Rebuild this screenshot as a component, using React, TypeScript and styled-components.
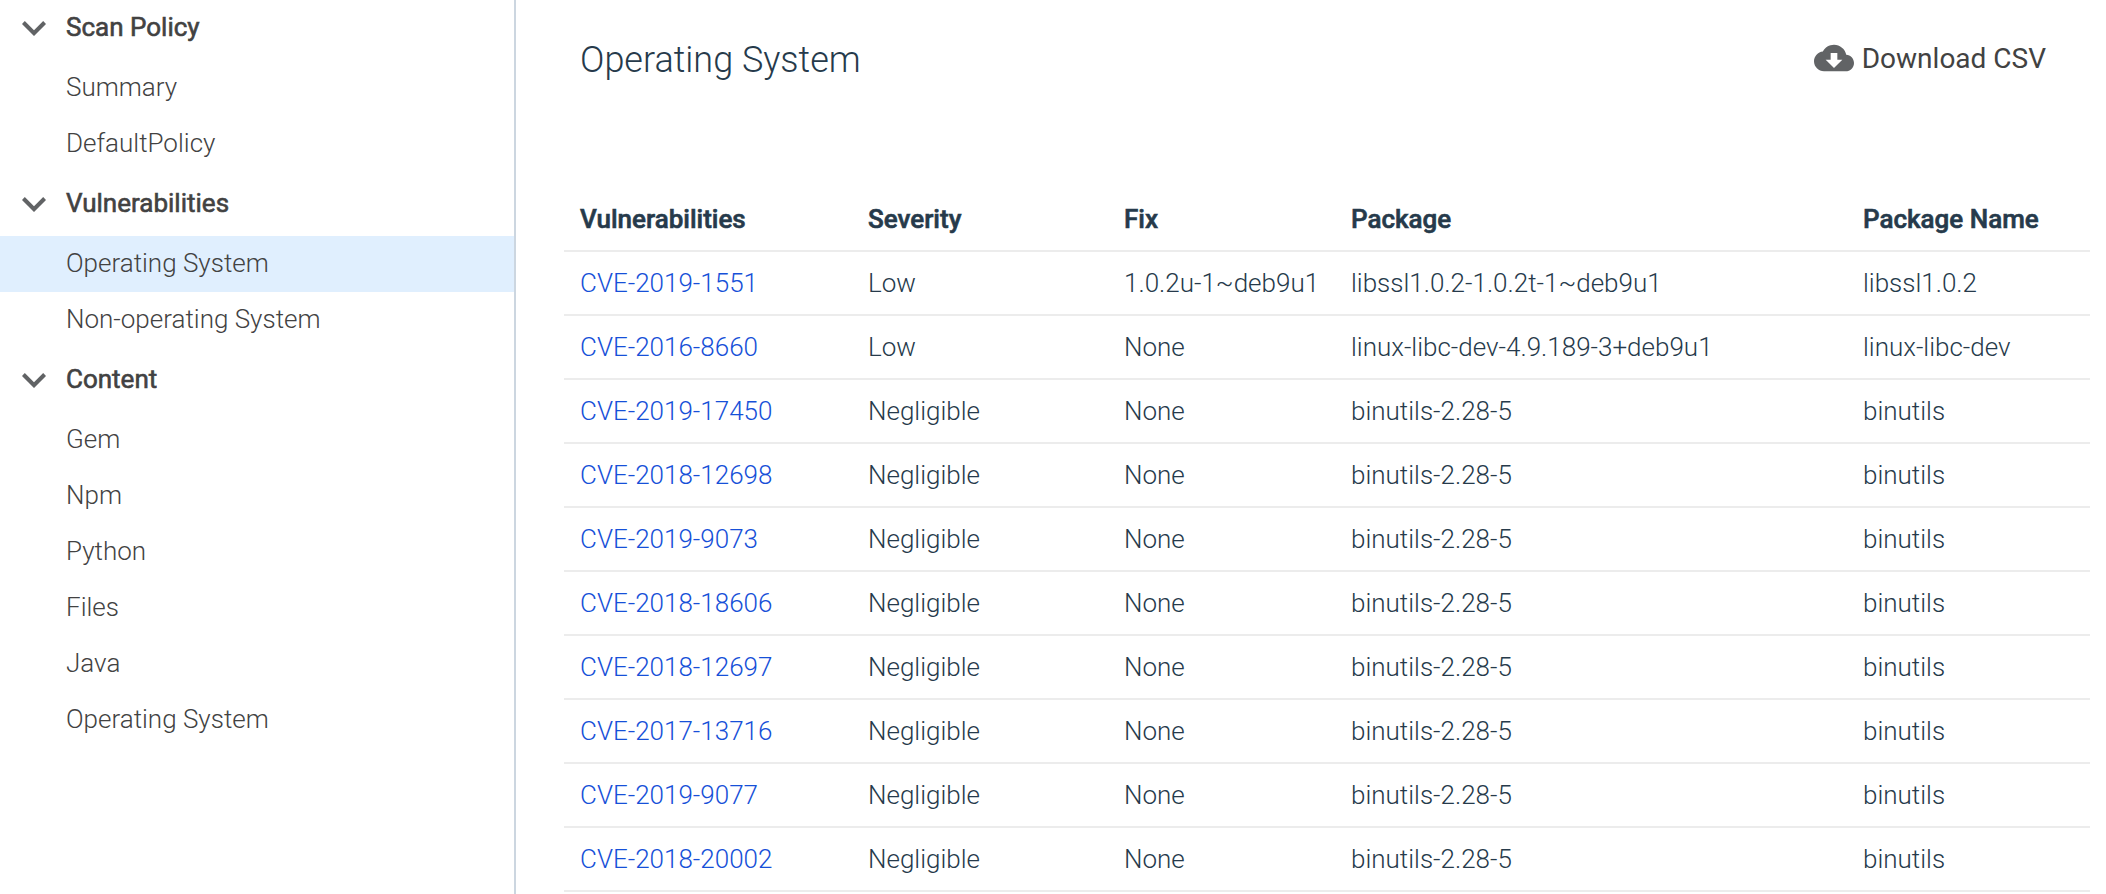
import React from "react";
import styled, { createGlobalStyle } from "styled-components";

const GlobalStyle = createGlobalStyle`
  *, *::before, *::after { box-sizing: border-box; }
  body {
    margin: 0;
    background: #fff;
    font-family: Roboto, "Liberation Sans", sans-serif;
    font-weight: 320;
    font-size: 26px;
    -webkit-font-smoothing: antialiased;
  }
`;

const Page = styled.div`
  display: flex;
  height: 894px;
  width: 2106px;
  overflow: hidden;
`;

const Sidebar = styled.nav`
  flex: none;
  width: 516px;
  border-right: 2px solid #ccd6e0;
  color: #424242;
`;

const Group = styled.section`
  &:first-child { margin-top: -4px; }
`;

const GroupHeader = styled.div`
  display: flex;
  align-items: center;
  height: 64px;
  padding: 0 0 2px 22px;
  font-weight: 400;
  -webkit-text-stroke: 0.6px currentColor;
`;

const Chevron = styled.svg`
  flex: none;
  width: 24px;
  height: 15px;
  margin: 2px 20px 0 0;
`;

const Item = styled.div<{ $active?: boolean }>`
  display: flex;
  align-items: center;
  height: 56px;
  padding: 0 0 2px 66px;
  background: ${(p) => (p.$active ? "#e0effe" : "transparent")};
`;

const Main = styled.main`
  flex: 1;
  min-width: 0;
  padding: 0 16px 0 48px;
  color: #263a4b;
`;

const Header = styled.header`
  display: flex;
  justify-content: space-between;
  align-items: flex-start;
  height: 188px;
  padding: 39px 44px 0 16px;
`;

const Title = styled.h1`
  margin: 0;
  font-size: 36px;
  line-height: 42px;
  font-weight: 300;
`;

const Download = styled.button`
  display: flex;
  align-items: center;
  gap: 8px;
  height: 39px;
  padding: 0;
  border: 0;
  background: none;
  color: #424242;
  font: 450 28px/39px Roboto, "Liberation Sans", sans-serif;
`;

const Cloud = styled.svg`
  width: 40px;
  height: 40px;
  margin-bottom: 2px;
`;

const Table = styled.div`
  display: grid;
`;

const Row = styled.div<{ $head?: boolean }>`
  display: grid;
  grid-template-columns: 288px 256px 227px 512px 1fr;
  align-items: center;
  height: 64px;
  padding: 0 0 0 16px;
  border-bottom: 2px solid #ececec;
  font-weight: ${(p) => (p.$head ? 500 : 320)};
  -webkit-text-stroke: ${(p) => (p.$head ? "0.6px currentColor" : "0")};
  white-space: nowrap;
`;

const Link = styled.a`
  color: #1650d8;
`;

const groups = [
  { name: "Scan Policy", items: ["Summary", "DefaultPolicy"] },
  { name: "Vulnerabilities", items: ["Operating System", "Non-operating System"], active: 0 },
  { name: "Content", items: ["Gem", "Npm", "Python", "Files", "Java", "Operating System"] },
];

const columns = ["Vulnerabilities", "Severity", "Fix", "Package", "Package Name"];

const binutils = ["Negligible", "None", "binutils-2.28-5", "binutils"];
const rows = [
  ["CVE-2019-1551", "Low", "1.0.2u-1~deb9u1", "libssl1.0.2-1.0.2t-1~deb9u1", "libssl1.0.2"],
  ["CVE-2016-8660", "Low", "None", "linux-libc-dev-4.9.189-3+deb9u1", "linux-libc-dev"],
  ["CVE-2019-17450", ...binutils],
  ["CVE-2018-12698", ...binutils],
  ["CVE-2019-9073", ...binutils],
  ["CVE-2018-18606", ...binutils],
  ["CVE-2018-12697", ...binutils],
  ["CVE-2017-13716", ...binutils],
  ["CVE-2019-9077", ...binutils],
  ["CVE-2018-20002", ...binutils],
];

export default function App() {
  return (
    <>
      <GlobalStyle />
      <Page>
        <Sidebar>
          {groups.map((group) => (
            <Group key={group.name}>
              <GroupHeader>
                <Chevron viewBox="6 8.59 12 7.41" fill="#616365">
                  <path d="M16.59 8.59 12 13.17 7.41 8.59 6 10l6 6 6-6z" />
                </Chevron>
                {group.name}
              </GroupHeader>
              {group.items.map((item, i) => (
                <Item key={item} $active={group.active === i}>{item}</Item>
              ))}
            </Group>
          ))}
        </Sidebar>
        <Main>
          <Header>
            <Title>Operating System</Title>
            <Download>
              <Cloud viewBox="0 0 24 24" fill="#616365">
                <path d="M19.35 10.04C18.67 6.59 15.64 4 12 4 9.11 4 6.6 5.64 5.35 8.04 2.34 8.36 0 10.91 0 14c0 3.31 2.69 6 6 6h13c2.76 0 5-2.24 5-5 0-2.64-2.05-4.78-4.65-4.96zM17 13l-5 5-5-5h3V9h4v4h3z" />
              </Cloud>
              Download CSV
            </Download>
          </Header>
          <Table>
            <Row $head>
              {columns.map((name) => <span key={name}>{name}</span>)}
            </Row>
            {rows.map(([cve, ...cells]) => (
              <Row key={cve}>
                <Link>{cve}</Link>
                {cells.map((cell, i) => <span key={i}>{cell}</span>)}
              </Row>
            ))}
          </Table>
        </Main>
      </Page>
    </>
  );
}
